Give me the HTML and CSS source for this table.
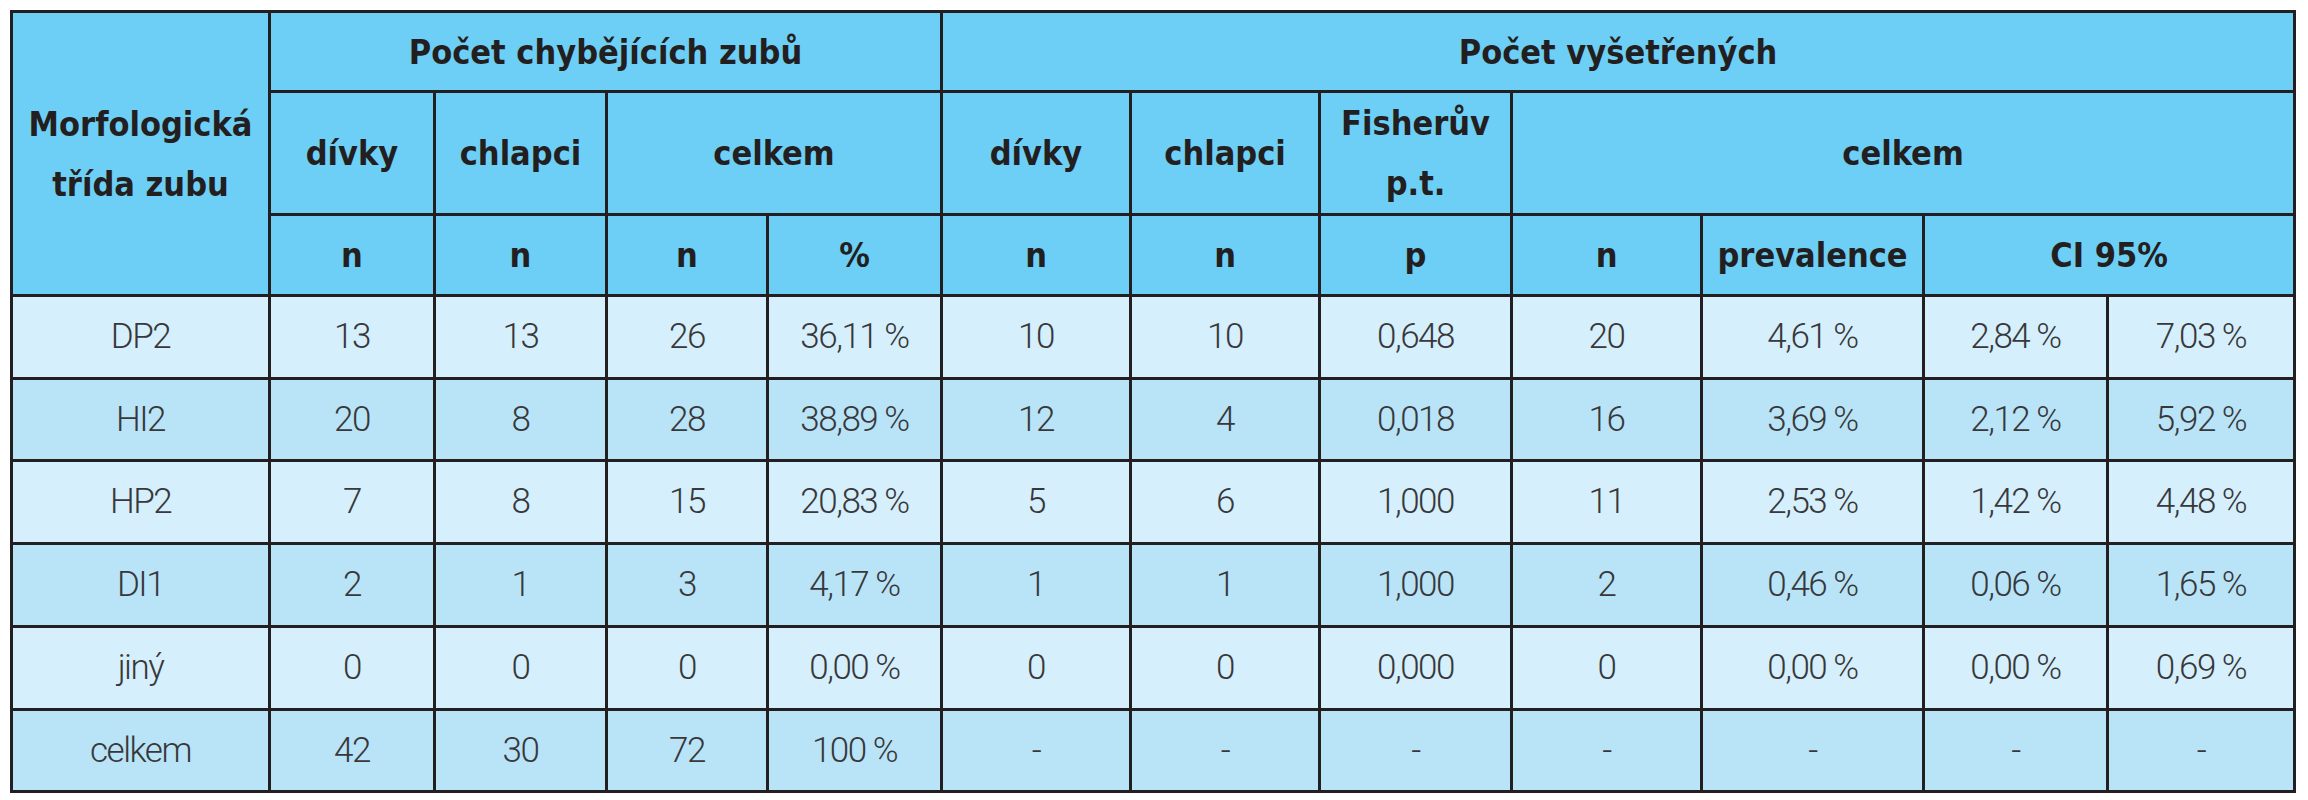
FILE: index.html
```html
<!DOCTYPE html>
<html lang="cs">
<head>
<meta charset="utf-8">
<title>Tabulka</title>
<link rel="stylesheet" href="styles.css">
</head>
<body>
<table class="grid">
  <colgroup>
    <col class="c1"><col class="c2"><col class="c3"><col class="c4"><col class="c5"><col class="c6">
    <col class="c7"><col class="c8"><col class="c9"><col class="c10"><col class="c11"><col class="c12">
  </colgroup>
  <thead>
    <tr class="h1">
      <th rowspan="3">Morfologická<br>třída zubu</th>
      <th colspan="4">Počet chybějících zubů</th>
      <th colspan="7">Počet vyšetřených</th>
    </tr>
    <tr class="h2">
      <th>dívky</th><th>chlapci</th><th colspan="2">celkem</th>
      <th>dívky</th><th>chlapci</th><th>Fisherův<br>p.t.</th><th colspan="4">celkem</th>
    </tr>
    <tr class="h3">
      <th>n</th><th>n</th><th>n</th><th>%</th><th>n</th><th>n</th><th>p</th><th>n</th><th>prevalence</th><th colspan="2">CI 95%</th>
    </tr>
  </thead>
  <tbody>
    <tr class="light r83">
      <td>DP2</td><td>13</td><td>13</td><td>26</td><td>36,11 %</td><td>10</td><td>10</td><td>0,648</td><td>20</td><td>4,61 %</td><td>2,84 %</td><td>7,03 %</td>
    </tr>
    <tr class="dark r82">
      <td>HI2</td><td>20</td><td>8</td><td>28</td><td>38,89 %</td><td>12</td><td>4</td><td>0,018</td><td>16</td><td>3,69 %</td><td>2,12 %</td><td>5,92 %</td>
    </tr>
    <tr class="light r83">
      <td>HP2</td><td>7</td><td>8</td><td>15</td><td>20,83 %</td><td>5</td><td>6</td><td>1,000</td><td>11</td><td>2,53 %</td><td>1,42 %</td><td>4,48 %</td>
    </tr>
    <tr class="dark r83">
      <td>DI1</td><td>2</td><td>1</td><td>3</td><td>4,17 %</td><td>1</td><td>1</td><td>1,000</td><td>2</td><td>0,46 %</td><td>0,06 %</td><td>1,65 %</td>
    </tr>
    <tr class="light r83">
      <td>jiný</td><td>0</td><td>0</td><td>0</td><td>0,00 %</td><td>0</td><td>0</td><td>0,000</td><td>0</td><td>0,00 %</td><td>0,00 %</td><td>0,69 %</td>
    </tr>
    <tr class="dark r82">
      <td>celkem</td><td>42</td><td>30</td><td>72</td><td>100 %</td><td>-</td><td>-</td><td>-</td><td>-</td><td>-</td><td>-</td><td>-</td>
    </tr>
  </tbody>
</table>
</body>
</html>
```
FILE: styles.css
```css
html, body {
  margin: 0;
  padding: 0;
  background: #ffffff;
}

body {
  padding: 10px;
}

.grid {
  table-layout: fixed;
  width: 2286px;
  border-collapse: separate;
  border-spacing: 0;
  border-top: 3px solid #231f20;
  border-left: 3px solid #231f20;
}

.grid th,
.grid td {
  box-sizing: border-box;
  padding: 0;
  border-right: 3px solid #231f20;
  border-bottom: 3px solid #231f20;
  text-align: center;
  vertical-align: middle;
  overflow: hidden;
  white-space: nowrap;
}

.grid th {
  background: #6dcff6;
  color: #231f20;
  font-family: "DejaVu Sans Condensed", "DejaVu Sans", sans-serif;
  font-stretch: condensed;
  font-weight: bold;
  font-size: 34px;
  line-height: 60px;
}

.grid td {
  color: #38383a;
  font-family: Roboto, "Liberation Sans", sans-serif;
  font-weight: 300;
  font-size: 35px;
  letter-spacing: -1.5px;
  line-height: 40px;
}

.c1 { width: 258px; }
.c2 { width: 165px; }
.c3 { width: 172px; }
.c4 { width: 161px; }
.c5 { width: 174px; }
.c6 { width: 189px; }
.c7 { width: 189px; }
.c8 { width: 192px; }
.c9 { width: 190px; }
.c10 { width: 222px; }
.c11 { width: 184px; }
.c12 { width: 187px; }

.h1 { height: 80px; }
.h2 { height: 121px; }
.h3 { height: 81px; }
.r83 { height: 83px; }
.r82 { height: 82px; }

.light td { background: #d5effc; }
.dark td { background: #b9e4f8; }
```
